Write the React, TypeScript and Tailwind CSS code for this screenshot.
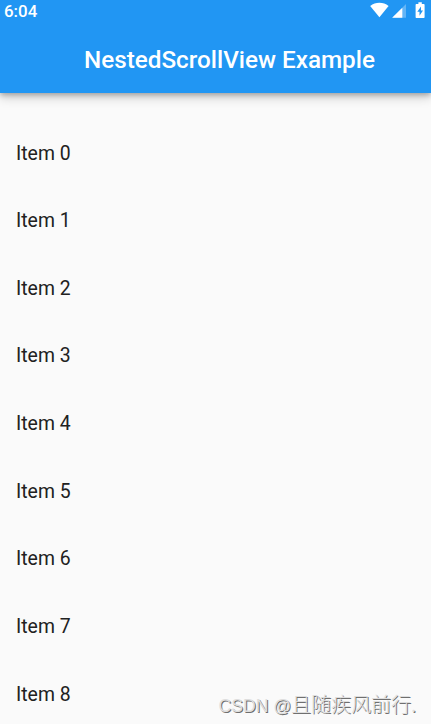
const items = Array.from({ length: 9 }, (_, i) => `Item ${i}`);

function StatusIcons() {
  return (
    <svg className="h-[22px] w-[62px]" viewBox="0 0 62 22" fill="white" aria-hidden="true">
      <path d="M1.2 5.9C3.9 3.8 7 2.8 10.4 2.8s6.5 1 9.2 3.1L10.4 17.2z" />
      <path d="M37 4v13.7H23.2z" fillOpacity=".3" />
      <path d="M33.3 7.7v10H23.2z" />
      <path
        fillRule="evenodd"
        d="M49.4 2.3h3.4v1.6h1.8c.6 0 1 .4 1 1v12.2c0 .6-.4 1-1 1h-7c-.6 0-1-.4-1-1V4.9c0-.6.4-1 1-1h1.8zM52 6.5l-3.7 5.3h2.2v4l3.5-5.4h-2z"
      />
    </svg>
  );
}

export default function App() {
  return (
    <div className="relative flex h-[724px] w-[431px] flex-col overflow-hidden bg-[#fafafa] font-[Roboto,sans-serif]">
      <header className="h-[92.5px] shrink-0 bg-[#2196f3] text-white shadow-[0_2px_5px_rgba(0,0,0,0.25),0_5px_10px_rgba(0,0,0,0.16)]">
        <div className="flex h-[27px] items-start justify-between pl-1">
          <span className="pt-[1px] text-[16.9px] leading-[21px] font-medium">6:04</span>
          <StatusIcons />
        </div>
        <h1 className="pt-[17px] pl-[84px] text-[24.25px] leading-8 font-medium whitespace-nowrap">
          NestedScrollView Example
        </h1>
      </header>
      <ul className="pt-[26.8px]">
        {items.map((item) => (
          <li key={item} className="flex h-[67.65px] items-center px-4 text-[19.4px] text-[#212121]">
            {item}
          </li>
        ))}
      </ul>
      <p className="absolute top-[690px] left-[218.5px] font-['Noto_Sans_CJK_SC',sans-serif] text-[20px] leading-[28px] font-light whitespace-nowrap text-[#dedede] [text-shadow:1px_1px_0_#6f6f6f]">
        <span className="font-['Liberation_Sans',sans-serif] text-[17.6px]">CSDN @</span>且随疾风前行.
      </p>
    </div>
  );
}
